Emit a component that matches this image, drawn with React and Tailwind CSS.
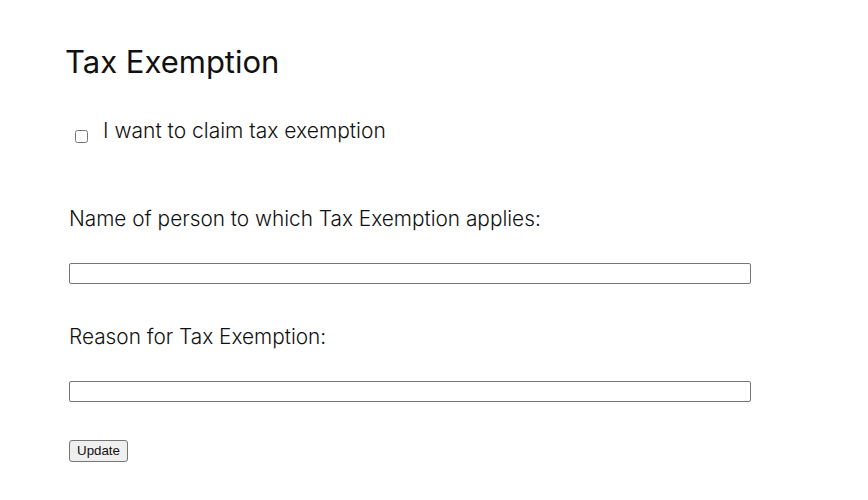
export default function App() {
  return (
    <div className="min-h-[500px] bg-white pl-[69px] pt-[40px] text-[#111]">
      <h1 className="ml-[-4px] text-[31px] font-normal leading-[44px] text-[#111] [font-family:Inter,'Noto_Sans',sans-serif]">
        Tax Exemption
      </h1>
      <div className="mt-[32px] flex items-start">
        <input type="checkbox" className="mt-[14px] ml-[6px] h-[13px] w-[13px]" />
        <label className="ml-[15px] text-[21px] font-light leading-[30px] text-[#111] [font-family:Inter,sans-serif]">
          I want to claim tax exemption
        </label>
      </div>
      <div className="mt-[58px] text-[20.8px] font-light leading-[30px] [font-family:Inter,sans-serif]">
        Name of person to which Tax Exemption applies:
      </div>
      <input type="text" className="mt-[29px] block h-[21px] w-[682px] rounded-[2px] border border-[#767676]" />
      <div className="mt-[38px] text-[20.8px] font-light leading-[30px] [font-family:Inter,sans-serif]">
        Reason for Tax Exemption:
      </div>
      <input type="text" className="mt-[29px] block h-[21px] w-[682px] rounded-[2px] border border-[#767676]" />
      <button className="mt-[38px] block h-[22px] rounded-[3px] border border-[#767676] bg-[#efefef] px-[7px] text-[13.33px] leading-none [font-family:'Liberation_Sans',Arial,sans-serif]">
        Update
      </button>
    </div>
  );
}
